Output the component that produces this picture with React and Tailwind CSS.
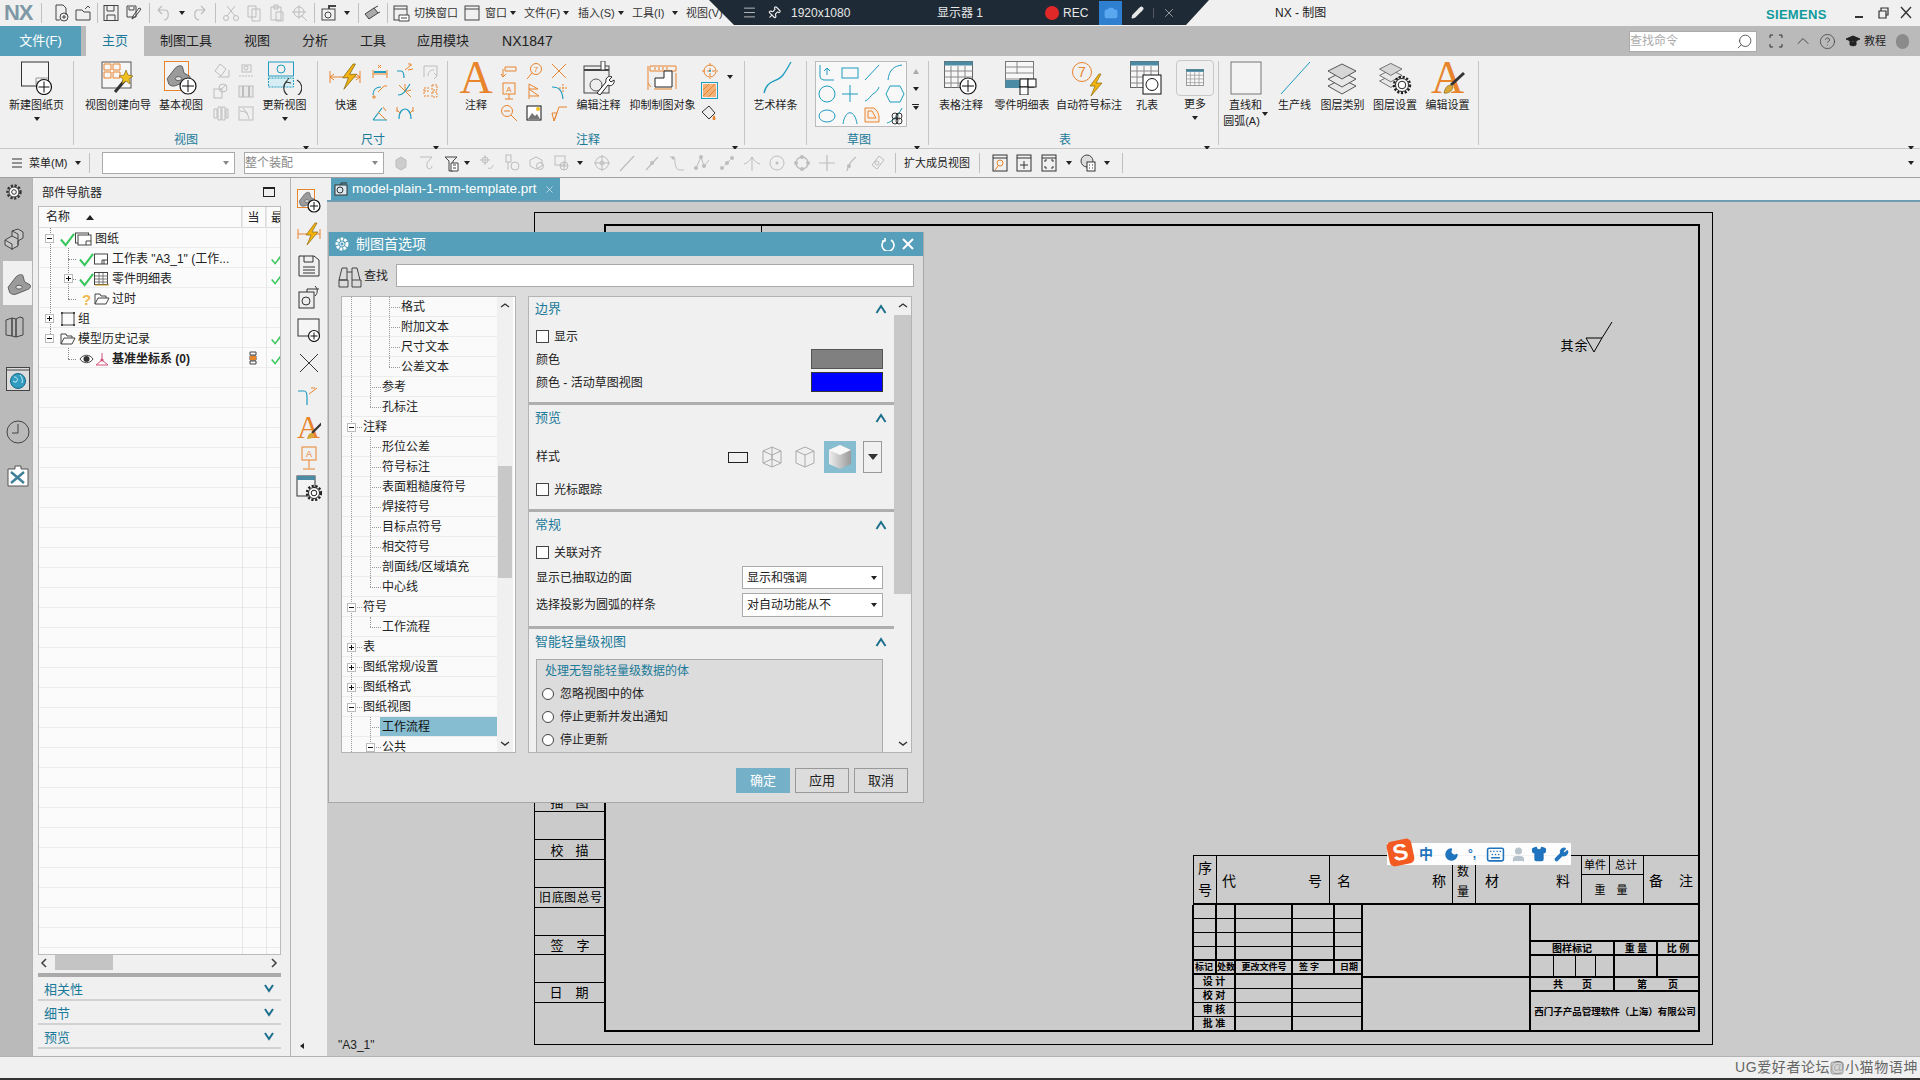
import React from 'react';
import clsx from 'clsx';
import { Moon, Keyboard, Shirt, Wrench, User, Search, HelpCircle, ChevronUp, Menu, Pin, Pencil, X, Camera } from 'lucide-react';

const OR = '#e8842c';
const TE = '#1f9cbf';
const KK = '#3c3c3c';
const GR = '#bdbdbd';

const Svg = ({ s = 20, h, vb, children }) => (
    <svg width={s} height={h || s} viewBox={vb || `0 0 ${s} ${h || s}`} fill="none" className="shrink-0">{children}</svg>
);

const Caret = () => <span className="inline-block w-0 h-0 border-x-[3px] border-x-transparent border-t-[4px] border-t-[#222]" />;

const PlusC = ({ x, y, r = 7 }) => (
    <g>
        <circle cx={x} cy={y} r={r} fill="#fff" stroke="#111" strokeWidth="1.2" />
        <path d={`M${x - r + 2} ${y}H${x + r - 2}M${x} ${y - r + 2}V${y + r - 2}`} stroke="#111" />
    </g>
);
const Bolt = ({ t = '' }) => <path transform={t} d="M14 0L5 12h5L6 22l11-13h-6l5-9z" fill="#f2b310" stroke="#8a6a10" strokeWidth=".7" />;
const Gear = ({ x, y, r = 7, c = '#222' }) => (
    <g>
        <circle cx={x} cy={y} r={r} stroke={c} strokeWidth="2.4" strokeDasharray="2.2 1.6" />
        <circle cx={x} cy={y} r={r - 1.5} fill="#fff" stroke={c} />
        <circle cx={x} cy={y} r={r - 4.2} stroke={c} />
    </g>
);
const Bracket = () => (
    <g>
        <path d="M4 22L14 9c3-3 7-4 9-2l2 8 7 4c2 2 0 5-3 6L14 31c-3 1-6 0-8-2z" fill="#9b9b9b" stroke="#444" />
        <ellipse cx="18" cy="22" rx="4" ry="2.5" fill="#e4e4e4" stroke="#444" />
    </g>
);
const Table = ({ hd = '#4b8ba3' }) => (
    <g>
        <rect x=".5" y=".5" width="28" height="26" fill="#f7f7f7" stroke="#666" />
        <rect x=".5" y=".5" width="28" height="4" fill={hd} />
        <path d="M.5 10h28M.5 16h28M.5 22h28M7 5v22M14 5v22M21 5v22" stroke="#888" />
    </g>
);
const Layers = () => (
    <g stroke="#555" fill="#e8e8e8">
        <path d="M16 18l14 7-14 8-14-8z" />
        <path d="M16 11l14 7-14 8-14-8z" />
        <path d="M16 3l14 7-14 8-14-8z" fill="#d6d6d6" />
    </g>
);

const big = {
    newSheet: <Svg s={34}><rect x="1.5" y="1" width="27" height="24" fill="#f5f5f5" stroke="#333" /><path d="M16 25v-8h12M16 21h12M22 17v8" stroke="#999" /><PlusC x={24} y={26} r={7.5} /></Svg>,
    wizard: <Svg s={34}><rect x="1" y="1" width="29" height="26" fill="#f6f6f6" stroke="#555" /><path d="M3 3h7v6H3zM12 3h7v6h-7zM3 11h7v6H3zM12 11h7v6h-7z" stroke={OR} /><path d="M14 31l10-12" stroke="#333" strokeWidth="3" /><path d="M25 9l2 5 5 1-4 3 1 5-4-3-4 3 1-5-4-3 5-1z" fill="#f0c020" stroke="#7a5a10" strokeWidth=".6" /></Svg>,
    base: <Svg s={34}><rect x=".5" y=".5" width="24" height="29" stroke={OR} fill="#f4f4f4" /><g transform="scale(.8)"><Bracket /></g><PlusC x={24} y={25} r={8} /></Svg>,
    update: <Svg s={34}><rect x=".5" y="1" width="25" height="14" stroke={TE} /><circle cx="13" cy="8" r="4" stroke={TE} /><rect x=".5" y="17" width="25" height="9" stroke={TE} fill="#d6edf3" strokeDasharray="2 1" /><path d="M29 19a9 9 0 1 1-10 1" stroke="#333" strokeWidth="1.2" /><path d="M21 17l-3 4 5 1" stroke="#333" /></Svg>,
    quick: <Svg s={34}><path d="M1 16h30M1 10v12M31 10v12M1 16l4-3M1 16l4 3M31 16l-4-3M31 16l-4 3" stroke={OR} /><Bolt t="translate(8 3) scale(1.15)" /></Svg>,
    edit: <Svg s={34}><rect x="2" y="5" width="25" height="27" fill="#eee" stroke="#444" /><path d="M2 9h25" stroke="#444" strokeWidth="2" /><circle cx="14" cy="24" r="6" stroke="#555" /><path d="M19 0h4v9h-4z" fill="#fff" stroke="#444" /><path d="M15 32l9-11c-1-4 3-7 6-5l-3 3 2 2 3-2c1 4-3 7-6 5l-8 10z" fill="#fff" stroke="#222" /></Svg>,
    suppress: <Svg s={34}><path d="M4 5h26v5H4z" stroke={OR} /><path d="M9 6v3M13 6v3M17 6v3M21 6v3" stroke={OR} /><path d="M2 5v24M2 22l3 4M30 12v16M26 28H8" stroke={OR} /><path d="M9 26V17h9v-7h8v16z" fill="#fff" stroke="#222" /></Svg>,
    spline: <Svg s={34}><path d="M5 32C8 18 18 22 24 14 27 10 29 6 32 1" stroke={TE} strokeWidth="1.3" /></Svg>,
    tableNote: <Svg s={34}><Table /><PlusC x={24} y={25} r={8} /></Svg>,
    parts: <Svg s={34}><rect x=".5" y=".5" width="28" height="26" fill="#f7f7f7" stroke="#777" /><path d="M.5 6h28M.5 12h28M.5 18h28M12 1v12" stroke="#888" /><rect x=".5" y="19" width="18" height="8" fill="#4b8ba3" /><rect x="15" y="18" width="8" height="8" fill="#fff" stroke="#111" /><rect x="23" y="18" width="8" height="8" fill="#fff" stroke="#111" /><rect x="15" y="26" width="8" height="8" fill="#fff" stroke="#111" /></Svg>,
    auto: <Svg s={36}><circle cx="11" cy="11" r="9.5" stroke={OR} /><text x="11" y="16" textAnchor="middle" fontSize="14" fill={OR} fontFamily="Liberation Sans">7</text><Bolt t="translate(14 13) scale(1)" /></Svg>,
    hole: <Svg s={34}><Table /><rect x="13" y="14" width="18" height="19" fill="#fff" stroke="#111" /><circle cx="22" cy="23.5" r="6" stroke="#111" /></Svg>,
    more: <Svg s={18} vb="0 0 29 29"><Table hd="#3f7f98" /></Svg>,
    lineBox: <Svg s={34}><rect x="2" y="1" width="30" height="32" fill="#f3f3f3" stroke="#777" /></Svg>,
    prodLine: <Svg s={34} h={34}><path d="M3 33L32 1" stroke={TE} /></Svg>,
    layers: <Svg s={34}><Layers /></Svg>,
    layerSet: <Svg s={34}><g transform="scale(.8)"><Layers /></g><Gear x={24} y={24} r={8} /></Svg>,
};
const BigA = ({ brush }) => (
    <div className="relative w-[34px] h-[34px]">
        <span className="block w-full text-center font-['Liberation_Serif',serif] text-[46px] leading-[34px] text-[#e8842c]">A</span>
        {brush && <svg width="34" height="34" className="absolute inset-0" fill="none"><path d="M33 12L20 24" stroke="#333" strokeWidth="3" /><path d="M20 24c-4 0-6 3-7 8 4 1 8-2 9-6z" fill="#d8a838" stroke="#7a5a10" strokeWidth=".6" /></svg>}
    </div>
);

const sm = {
    g1: <Svg s={18}><path d="M3 9l5-7 6 5-5 7zM6 15h11V8" stroke={GR} /></Svg>,
    g2: <Svg s={18}><rect x="5" y="3" width="9" height="7" stroke={GR} /><circle cx="9" cy="6" r="2" stroke={GR} /><path d="M2 14h14" stroke={GR} strokeDasharray="2 1" /></Svg>,
    g3: <Svg s={18}><rect x="2" y="7" width="8" height="9" stroke={GR} /><circle cx="11" cy="6" r="4" stroke={GR} /><path d="M8 8l6-5" stroke={GR} /></Svg>,
    g4: <Svg s={18}><rect x="2" y="4" width="14" height="11" stroke={GR} fill="#e8e8e8" /><path d="M6 4v11M12 4v11" stroke={GR} strokeWidth="2" /></Svg>,
    g5: <Svg s={18}><path d="M2 5h3v9H2zM6 3h3v13H6zM10 3h3v13h-3zM14 5h2v9h-2z" stroke={GR} /></Svg>,
    g6: <Svg s={18}><rect x="2" y="3" width="14" height="13" stroke={GR} /><path d="M3 7c6 0 8 3 9 8M6 4l5 6" stroke={GR} /></Svg>,
    d1: <Svg s={18}><path d="M2 8v8M16 8v8M2 12h14" stroke={OR} /><rect x="3" y="9" width="12" height="2" fill={TE} /><path d="M7 3l3 3M10 3L7 6" stroke={OR} /></Svg>,
    d2: <Svg s={18}><path d="M1 9h4c2 0 3 2 3 7" stroke={TE} strokeWidth="1.2" /><path d="M15 3l-6 5M12 8l5-1" stroke={OR} /><path d="M12 2h3v2" stroke={OR} /></Svg>,
    d3: <Svg s={18}><path d="M3 4h13v10M3 4v11M7 14c0-4 2-6 6-6" stroke={GR} /><path d="M13 11l3 3-3 3" stroke={GR} /></Svg>,
    d4: <Svg s={18}><path d="M2 13c0-5 3-8 8-8" stroke={TE} strokeWidth="1.2" /><path d="M7 10l6-6M13 4h3M1 15h4M3 13v4" stroke={OR} /></Svg>,
    d5: <Svg s={18}><path d="M3 3l12 12M9 2c0 8 0 8 6 6" stroke={OR} /><path d="M2 13c6 0 8-5 12-11" stroke={TE} strokeWidth="1.2" /></Svg>,
    d6: <Svg s={18}><path d="M3 12V6h5M3 9h5M11 3h5v5h-5zM11 10h5v5h-5zM3 14h5" stroke={OR} strokeDasharray="2 1" /></Svg>,
    d7: <Svg s={18}><path d="M2 16L11 4M2 16h14" stroke={TE} strokeWidth="1.2" /><path d="M7 8l8 8M12 3l3 4" stroke={OR} /></Svg>,
    d8: <Svg s={18}><path d="M3 15c0-8 4-10 6-10s6 2 6 10" stroke={TE} strokeWidth="1.2" /><path d="M1 6l3 3M17 6l-3 3M1 3v5M17 3v5" stroke={OR} /></Svg>,
    a1: <Svg s={18}><path d="M5 5h11v4H5zM3 7v8M3 15l-2-3M3 15l3-3" stroke={OR} /></Svg>,
    a2: <Svg s={18}><circle cx="11" cy="7" r="5.5" stroke={OR} /><path d="M7 11l-5 6" stroke={OR} /><text x="11" y="10" fontSize="8" textAnchor="middle" fill={OR} fontFamily="Liberation Sans">7</text></Svg>,
    a3: <Svg s={18}><path d="M2 2l14 14M16 2L2 16" stroke={OR} /></Svg>,
    a4: <Svg s={18}><rect x="3" y="1" width="12" height="11" stroke={OR} /><text x="9" y="10" fontSize="8" textAnchor="middle" fill={OR} fontFamily="Liberation Sans">A</text><path d="M9 12v5M5 17h8" stroke={OR} /></Svg>,
    a5: <Svg s={18}><path d="M4 17V2l9 5H4M4 7l10 7H4" stroke={OR} /></Svg>,
    a6: <Svg s={18}><path d="M2 5c7 0 10 3 11 12" stroke={TE} strokeWidth="1.2" /><path d="M13 2v8M9 6h8" stroke={OR} strokeDasharray="2 1" /></Svg>,
    a7: <Svg s={18}><circle cx="7" cy="7" r="5.5" stroke={OR} /><path d="M4 7h6M11 11l6 6" stroke={OR} /></Svg>,
    a8: <Svg s={18}><rect x="2" y="2" width="14" height="14" fill="#fff" stroke="#111" /><path d="M3 15l4-6 3 3 2-2 3 5z" fill="#777" /><circle cx="13" cy="5" r="2" fill="#f2c020" /></Svg>,
    a9: <Svg s={18}><path d="M2 9l5 0-3 8zM4 17L9 3h8" stroke={OR} /></Svg>,
    target: <Svg s={18}><circle cx="9" cy="9" r="6" stroke={OR} /><path d="M9 1v16M1 9h16" stroke={OR} strokeDasharray="3 2" /><circle cx="9" cy="9" r="1" fill={TE} /></Svg>,
    hatch: <Svg s={18}><rect x=".5" y=".5" width="16" height="16" stroke={TE} /><rect x="2" y="2" width="13" height="13" fill="#f3b27a" /><path d="M2 8l6-6M2 14L14 2M7 15l8-8" stroke="#e8842c" /></Svg>,
    fill: <Svg s={18}><path d="M1 8l7-6 6 7-6 6z" fill="#eee" stroke="#333" /><path d="M13 11c-2 3-2 5 0 5s2-2 0-5z" fill={OR} /></Svg>,
};

const gal = [
    <path d="M3 3v11c0 3 2 4 5 4h9M10 13V7M7 9l3-3 3 3" stroke={TE} />,
    <rect x="2" y="6" width="16" height="10" stroke={TE} />,
    <path d="M3 18L17 3" stroke={TE} />,
    <path d="M3 18C4 8 9 4 17 3" stroke={TE} />,
    <circle cx="10" cy="11" r="8" stroke={TE} />,
    <path d="M10 2v17M2 11h16" stroke={TE} />,
    <path d="M3 18c4-1 5-5 8-7s5-4 6-7" stroke={TE} />,
    <path d="M5 3h10l4 8-4 8H5l-4-8z" stroke={TE} />,
    <ellipse cx="10" cy="11" rx="8" ry="6" stroke={TE} />,
    <path d="M3 19C5 4 15 4 17 19" stroke={TE} />,
    <path d="M3 3h9c3 2 5 6 5 9v5H3zM6 6h4l4 7H6z" stroke={OR} fill="#f8f0e8" />,
    <g><path d="M2 18c4-1 10-5 15-15" stroke={TE} /><circle cx="10" cy="11" r="3" stroke="#333" /><circle cx="14" cy="11" r="3" stroke="#333" /><circle cx="10" cy="16" r="3" stroke="#333" /><circle cx="14" cy="16" r="3" stroke="#333" /></g>,
];

const tb = {
    nx1: <Svg s={18}><path d="M4 1h7l3 3v7M4 1v15h4" stroke="#444" /><circle cx="12" cy="13" r="4" stroke="#444" /><path d="M10 13h4M12 11v4" stroke="#444" /></Svg>,
    nx2: <Svg s={18}><path d="M2 6h6l2 2h6v8H2zM11 5l3-3 2 2" stroke="#444" /></Svg>,
    save: <Svg s={18}><rect x="2" y="1.5" width="14" height="15" stroke="#444" /><path d="M5 2v5h7V2M5 16v-5h8v5" stroke="#444" /></Svg>,
    saveas: <Svg s={18}><path d="M2 2h9v11H2zM4 3v3h5V3M16 5l-6 8-3 2 1-3 6-8z" stroke="#444" /></Svg>,
    undo: <Svg s={18}><path d="M4 6h7c4 0 5 9-1 10M4 6l4-4M4 6l4 4" stroke={GR} strokeWidth="1.2" /></Svg>,
    redo: <Svg s={18}><path d="M14 6H7c-4 0-5 9 1 10M14 6l-4-4M14 6l-4 4" stroke={GR} strokeWidth="1.2" /></Svg>,
    cut: <Svg s={18}><circle cx="4" cy="14" r="2.5" stroke={GR} /><circle cx="14" cy="14" r="2.5" stroke={GR} /><path d="M5 12L13 2M13 12L5 2" stroke={GR} /></Svg>,
    copy: <Svg s={18}><path d="M3 2h8v11H3zM7 5h8v12H7z" stroke={GR} /></Svg>,
    paste: <Svg s={18}><path d="M3 3h10v13H3zM6 1h4v4H6zM8 8h7v9H8z" stroke={GR} /></Svg>,
    pos: <Svg s={18}><circle cx="8" cy="8" r="5" stroke={GR} /><path d="M8 1v14M1 8h14M10 11l6 6" stroke={GR} /></Svg>,
    cam: <Svg s={18}><rect x="2" y="5" width="13" height="11" stroke="#444" /><circle cx="8" cy="11" r="3" stroke="#444" /><path d="M9 5V2h7" stroke="#444" strokeWidth="2" /></Svg>,
    wand: <Svg s={18}><path d="M2 10l9-6 4 5-9 6z" fill="#aaa" stroke="#444" /><path d="M11 4l4-2M15 9l2-1" stroke="#444" /></Svg>,
    win: <Svg s={18}><rect x="2" y="2" width="13" height="14" stroke="#444" /><path d="M2 5h13M7 11h10v6H7z" stroke="#444" fill="#fff" /><path d="M9 14h6" stroke="#444" /></Svg>,
    win2: <Svg s={18}><rect x="2" y="2" width="14" height="14" stroke="#444" /><path d="M2 5h14" stroke="#444" /></Svg>,
};
const gy = [
    <path d="M4 6l5-3 5 3v7l-5 3-5-3z" fill="#ccc" stroke={GR} />,
    <path d="M3 3h12l-5 6v4M10 13c1 3 5 2 5-1" stroke={GR} />,
    <g><path d="M3 3h12l-4 4v10H7V7z" stroke="#444" /><path d="M9 9h7v8H9z" fill="#fff" stroke="#444" /><path d="M11 11h3M11 14h3" stroke="#444" /></g>,
    <g><circle cx="7" cy="6" r="3" stroke={GR} /><path d="M7 1v10M2 6h10M10 14c2 1 5 0 5-3" stroke={GR} /></g>,
    <g><rect x="3" y="1" width="5" height="7" stroke={GR} /><path d="M5 8v8" stroke={GR} /><circle cx="12" cy="12" r="4" stroke={GR} /></g>,
    <g><path d="M2 6l6-3 6 3v6l-6 3-6-3z" stroke={GR} /><circle cx="12" cy="12" r="3.5" stroke={GR} /></g>,
    <g><rect x="2" y="2" width="10" height="9" stroke={GR} /><circle cx="11" cy="12" r="4" stroke={GR} /><path d="M7 12h8M11 8v8" stroke={GR} /></g>,
    <g><circle cx="9" cy="9" r="6.5" stroke={GR} /><circle cx="9" cy="9" r="2" stroke={GR} /><path d="M9 1v16M1 9h16" stroke={GR} /></g>,
    <path d="M2 17L16 2" stroke={GR} strokeWidth="1.2" />,
    <g><path d="M3 16L15 3" stroke={GR} strokeWidth="1.2" /><circle cx="9" cy="9" r="2" fill={GR} /></g>,
    <g><path d="M2 3h3c3 0 1 6 3 10 1 3 3 3 8 3" stroke={GR} /><circle cx="5" cy="4" r="1.5" fill={GR} /></g>,
    <g><path d="M3 14L8 3l3 9 5-6" stroke={GR} /><circle cx="3" cy="14" r="2" fill={GR} /><circle cx="8" cy="3" r="2" fill={GR} /><circle cx="11" cy="12" r="2" fill={GR} /></g>,
    <g><path d="M3 15L15 3" stroke={GR} strokeDasharray="3 2" /><circle cx="4" cy="14" r="2" fill={GR} /><circle cx="9" cy="9" r="2" fill={GR} /><circle cx="14" cy="4" r="2" fill={GR} /></g>,
    <path d="M9 3v14M1 10c3-1 6-3 8-7 2 4 5 6 8 7" stroke={GR} />,
    <g><circle cx="9" cy="9" r="7" stroke={GR} /><circle cx="9" cy="9" r="1.5" fill={GR} /></g>,
    <g><circle cx="9" cy="9" r="6" stroke={GR} strokeWidth="1.4" /><circle cx="9" cy="3" r="2" fill={GR} /><circle cx="3" cy="9" r="2" fill={GR} /><circle cx="15" cy="9" r="2" fill={GR} /><circle cx="9" cy="15" r="2" fill={GR} /></g>,
    <path d="M9 1v16M1 9h16" stroke={GR} strokeWidth="1.2" />,
    <g><path d="M4 17c1-6 4-10 9-14" stroke={GR} strokeWidth="1.2" /><circle cx="6" cy="12" r="2" fill={GR} /></g>,
    <g><path d="M4 11l7-9 5 4-7 9z" stroke={GR} /><circle cx="9" cy="9" r="2" stroke={GR} /></g>,
];
const dk = [
    <g><rect x="2" y="1" width="14" height="16" stroke="#333" /><path d="M2 4h14" stroke="#333" /><circle cx="9" cy="9" r="3" stroke={OR} /><path d="M7 12l-3 4" stroke={OR} /></g>,
    <g><rect x="2" y="1" width="14" height="16" stroke="#333" /><path d="M2 4h14M9 7v8M5 11h8" stroke="#333" /></g>,
    <g><rect x="2" y="1" width="14" height="16" stroke="#333" /><path d="M2 4h14M5 8V6h2M13 8V6h-2M5 12v2h2M13 12v2h-2" stroke="#333" /></g>,
    <g><circle cx="8" cy="7" r="6" stroke="#444" fill="#ddd" /><rect x="8" y="8" width="8" height="9" fill="#fff" stroke="#333" /><path d="M10 11h1M13 11h1M10 14h1M13 14h1" stroke="#333" /></g>,
];

const Sep = () => <span className="w-px h-[20px] bg-[#c0c0c0] shrink-0" />;
const Cell = ({ w, children }) => <span className={clsx('flex justify-center items-center shrink-0', w)}>{children}</span>;
const Gap = ({ w }) => <span className={clsx('shrink-0', w)} />;

const TitleBar = () => (
    <div className="relative h-[26px] bg-[#f0f0f0] flex items-center text-[11px] text-[#333] whitespace-nowrap">
        <span className="w-[41px] pl-[4px] font-['Liberation_Sans',sans-serif] text-[22px] font-bold text-[#7f98a6] leading-none tracking-tighter">NX</span>
        <Sep /><Gap w="w-[8px]" />
        <Cell w="w-[22px]">{tb.nx1}</Cell><Cell w="w-[21px]">{tb.nx2}</Cell>
        <Gap w="w-[4px]" /><Sep /><Gap w="w-[2px]" />
        <Cell w="w-[22px]">{tb.save}</Cell><Cell w="w-[23px]">{tb.saveas}</Cell>
        <Gap w="w-[4px]" /><Sep /><Gap w="w-[2px]" />
        <Cell w="w-[22px]">{tb.undo}</Cell><Cell w="w-[16px]"><Caret /></Cell><Cell w="w-[20px]">{tb.redo}</Cell>
        <Gap w="w-[5px]" /><Sep /><Gap w="w-[3px]" />
        <Cell w="w-[23px]">{tb.cut}</Cell><Cell w="w-[23px]">{tb.copy}</Cell><Cell w="w-[23px]">{tb.paste}</Cell><Cell w="w-[23px]">{tb.pos}</Cell>
        <Gap w="w-[3px]" /><Sep /><Gap w="w-[3px]" />
        <Cell w="w-[22px]">{tb.cam}</Cell><Cell w="w-[14px]"><Caret /></Cell>
        <Gap w="w-[4px]" /><Sep /><Gap w="w-[2px]" />
        <Cell w="w-[22px]">{tb.wand}</Cell>
        <Gap w="w-[4px]" /><Sep />
        <Cell w="w-[26px]">{tb.win}</Cell><span className="w-[44px]">切换窗口</span>
        <Gap w="w-[1px]" /><Cell w="w-[26px]">{tb.win2}</Cell><span className="w-[22px]">窗口</span>
        <Cell w="w-[12px]"><Caret /></Cell><Gap w="w-[5px]" />
        <span className="w-[29px]">文件(F)</span><Cell w="w-[25px]"><Caret /></Cell>
        <span className="w-[36px]">插入(S)</span><Cell w="w-[14px]"><Caret /></Cell><Gap w="w-[4px]" />
        <span className="w-[35px]">工具(I)</span><Cell w="w-[16px]"><Caret /></Cell><Gap w="w-[3px]" />
        <span className="w-[35px]">视图(V)</span>
        <span className="ml-[554px] w-[55px] text-[12px] text-[#222]">NX - 制图</span>
        <span className="ml-[436px] w-[62px] font-['Liberation_Sans',sans-serif] text-[13px] font-bold text-[#0f9a9c] tracking-[.3px] pt-[3px]">SIEMENS</span>
        <span className="ml-[23px]"><Svg s={14}><path d="M4 11h8" stroke="#333" strokeWidth="2" /></Svg></span>
        <span className="ml-[11px]"><Svg s={14}><path d="M3 5h7v7H3zM5 5V2h7v7h-2" stroke="#333" strokeWidth="1.2" /></Svg></span>
        <span className="ml-[8px]"><Svg s={16}><path d="M3 2l10 11M13 2L3 13" stroke="#333" strokeWidth="1.4" /></Svg></span>

        {/* screen recorder overlay */}
        <div className="absolute left-[709px] top-0 w-[500px] h-[25px] bg-[#1e2a36] text-[#e8e8e8] flex items-center [clip-path:polygon(0_0,100%_0,477px_100%,25px_100%)]">
            <span className="ml-[33px]"><Menu size={15} strokeWidth={1.2} /></span>
            <span className="ml-[10px] rotate-45"><Pin size={14} /></span>
            <span className="ml-[10px] w-[62px] font-['Liberation_Sans',sans-serif] text-[12px]">1920x1080</span>
            <span className="ml-[84px] w-[47px] text-[12px]">显示器 1</span>
            <span className="ml-[61px] w-[14px] h-[14px] rounded-full bg-[#e02828]" />
            <span className="ml-[4px] w-[26px] font-['Liberation_Sans',sans-serif] text-[12px]">REC</span>
            <span className="ml-[10px] w-[23px] h-[24px] bg-[#2f7fd0] flex items-center justify-center"><Camera size={14} className="text-[#5aa8f0]" fill="#5aa8f0" /></span>
            <span className="ml-[9px] w-[16px]"><Pencil size={13} fill="#e8e8e8" /></span>
            <span className="ml-[6px] w-px h-[10px] bg-[#556]" />
            <span className="ml-[8px]"><X size={14} strokeWidth={1} /></span>
        </div>
    </div>
);

const TabBar = () => (
    <div className="h-[30px] bg-[#bababa] flex items-stretch text-[13px] text-[#222] whitespace-nowrap">
        <span className="w-[81px] bg-[#559fba] text-white flex items-center justify-center">文件(F)</span>
        <span className="ml-[5px] w-[58px] bg-[#f0f0f0] text-[#1b7a99] flex items-center justify-center">主页</span>
        <span className="ml-[16px] self-center">制图工具</span>
        <span className="ml-[32px] self-center">视图</span>
        <span className="ml-[32px] self-center">分析</span>
        <span className="ml-[32px] self-center">工具</span>
        <span className="ml-[31px] self-center">应用模块</span>
        <span className="ml-[33px] w-[50px] self-center font-['Liberation_Sans',sans-serif] text-[14px]">NX1847</span>
        <span className="ml-[1077px] self-center w-[128px] h-[21px] bg-white border border-[#aaa] flex items-center text-[12px] text-[#aaa] pr-[3px]">查找命令<span className="ml-auto -scale-x-100 text-[#444]"><Search size={17} strokeWidth={1.2} /></span></span>
        <span className="ml-[10px] self-center"><Svg s={18}><path d="M3 6V3h3M15 6V3h-3M3 12v3h3M15 12v3h-3" stroke="#333" /></Svg></span>
        <span className="ml-[8px] self-center text-[#333]"><ChevronUp size={20} strokeWidth={1} /></span>
        <span className="ml-[6px] self-center text-[#333]"><HelpCircle size={17} strokeWidth={1} /></span>
        <span className="ml-[9px] self-center"><Svg s={16}><path d="M1 6l7-3 7 3-7 3zM5 8v4c2 1 4 1 6 0V8" fill="#222" stroke="#222" /></Svg></span>
        <span className="ml-[3px] self-center text-[11px]">教程</span>
        <span className="ml-[10px] self-center w-[13px] h-[15px] rounded-full bg-[#8b8b8b]" />
    </div>
);

const Group = ({ w, label, lp, caret, cr, children }) => (
    <div className={clsx('relative h-[84px] shrink-0 flex flex-col border-r border-[#c6c6c6]', w)}>
        <div className="h-[71px] flex items-start">{children}</div>
        {label && <span className={clsx('h-[13px] leading-[16px] text-[12px] text-[#1b7a99]', lp)}>{label}</span>}
        {caret && <span className={clsx('absolute top-[76px] leading-none', cr)}><Caret /></span>}
    </div>
);

const Big = ({ w, icon, label, label2, caret, c2 }) => (
    <div className={clsx('flex flex-col items-center shrink-0 whitespace-nowrap text-[11px] text-[#222]', w)}>
        <div className="h-[34px] flex items-start justify-center">{icon}</div>
        <span className="h-[16px] leading-[16px] mt-[2px]">{label}</span>
        {label2 && <span className="h-[16px] leading-[16px] flex items-start">{label2}{c2 && <span className="-mt-[1px] ml-[2px] leading-none flex"><Caret /></span>}</span>}
        {caret && <span className="mt-[4px] leading-none flex"><Caret /></span>}
    </div>
);

const SmGrid = ({ cols, ml, items }) => (
    <div className={clsx('grid grid-rows-[19px_22px_22px] shrink-0', cols, ml)}>
        {items.map((it, i) => <span key={i} className="flex items-center justify-center">{it}</span>)}
    </div>
);

const Ribbon = () => (
    <div className="relative h-[93px] bg-[#f0f0f0] pt-[5px] flex border-b border-[#c8c8c8]">
        <Group w="w-[74px]"><Big w="w-[73px]" icon={big.newSheet} label="新建图纸页" caret /></Group>
        <Group w="w-[244px]" label="视图" lp="pl-[100px]" caret cr="left-[229px]">
            <Big w="w-[88px]" icon={big.wizard} label="视图创建向导" />
            <Big w="w-[38px]" icon={big.base} label="基本视图" />
            <SmGrid cols="grid-cols-[25px_25px]" ml="ml-[8px]" items={[sm.g1, sm.g2, sm.g3, sm.g4, sm.g5, sm.g6]} />
            <Big w="w-[53px]" icon={big.update} label="更新视图" caret />
        </Group>
        <Group w="w-[130px]" label="尺寸" lp="pl-[43px]" caret cr="left-[115px]">
            <Big w="w-[56px]" icon={big.quick} label="快速" />
            <SmGrid cols="grid-cols-[25px_25px_25px]" ml="-ml-[7px]" items={[sm.d1, sm.d2, sm.d3, sm.d4, sm.d5, sm.d6, sm.d7, sm.d8]} />
        </Group>
        <Group w="w-[297px]" label="注释" lp="pl-[128px]" caret cr="left-[284px]">
            <Big w="w-[56px]" icon={<BigA />} label="注释" />
            <SmGrid cols="grid-cols-[25px_25px_25px]" ml="-ml-[8px]" items={[sm.a1, sm.a2, sm.a3, sm.a4, sm.a5, sm.a6, sm.a7, sm.a8, sm.a9]} />
            <Big w="w-[55px]" icon={big.edit} label="编辑注释" />
            <Big w="w-[73px]" icon={big.suppress} label="抑制制图对象" />
            <SmGrid cols="grid-cols-[22px]" items={[sm.target, sm.hatch, sm.fill]} />
            <span className="mt-[5px] ml-[6px] leading-none"><Caret /></span>
        </Group>
        <Group w="w-[62px]"><Big w="w-[61px]" icon={big.spline} label="艺术样条" /></Group>
        <Group w="w-[122px]" label="草图" lp="pl-[40px]" caret cr="left-[107px]">
            <div className="ml-[8px] w-[92px] h-[66px] bg-[#f8f8f8] border border-[#bbb] grid grid-cols-4 grid-rows-3 shrink-0 items-center justify-items-center">
                {gal.map((g, i) => <Svg key={i} s={20} h={21}>{g}</Svg>)}
            </div>
            <div className="ml-[5px] flex flex-col items-center gap-[13px] pt-[8px] text-[#888]">
                <span className="w-0 h-0 border-x-[3px] border-x-transparent border-b-[5px] border-b-[#aaa]" />
                <Caret />
                <span className="flex flex-col items-center gap-[1px]"><span className="w-[7px] h-px bg-[#222]" /><Caret /></span>
            </div>
        </Group>
        <Group w="w-[290px]" label="表" lp="pl-[130px]" caret cr="left-[275px]">
            <Big w="w-[64px]" icon={big.tableNote} label="表格注释" />
            <Big w="w-[58px]" icon={big.parts} label="零件明细表" />
            <Big w="w-[76px]" icon={big.auto} label="自动符号标注" />
            <Big w="w-[40px]" icon={big.hole} label="孔表" />
            <div className="w-[38px] flex flex-col items-center text-[11px] text-[#222] ml-[9px] -mt-[1px]">
                <span className="w-[38px] h-[36px] rounded-[4px] border border-[#c8c8c8] flex items-center justify-center">{big.more}</span>
                <span className="h-[16px] leading-[16px]">更多</span>
                <span className="mt-[4px] leading-none flex"><Caret /></span>
            </div>
        </Group>
        <Group w="w-[260px]">
            <Big w="w-[53px]" icon={big.lineBox} label="直线和" label2="圆弧(A)" c2 />
            <Big w="w-[45px]" icon={big.prodLine} label="生产线" />
            <Big w="w-[51px]" icon={big.layers} label="图层类别" />
            <Big w="w-[54px]" icon={big.layerSet} label="图层设置" />
            <Big w="w-[51px]" icon={<BigA brush />} label="编辑设置" />
        </Group>
        <span className="absolute left-[1908px] top-[81px] leading-none"><Caret /></span>
    </div>
);

const Sel = ({ w, text }) => (
    <span className={clsx('h-[22px] bg-white border border-[#aaa] flex items-center text-[12px] text-[#888] pr-[5px] shrink-0', w)}>
        {text}<span className="ml-auto w-0 h-0 border-x-[3px] border-x-transparent border-t-[4px] border-t-[#888]" />
    </span>
);
const TI = ({ i, w = 'w-[25px]', arr = gy }) => <Cell w={w}><Svg s={18}>{arr[i]}</Svg></Cell>;

const Toolbar = () => (
    <div className="relative h-[29px] bg-[#f0f0f0] border-b border-[#a0a0a0] flex items-center text-[11px] text-[#222] whitespace-nowrap">
        <Gap w="w-[8px]" /><Cell w="w-[18px]"><Svg s={12}><path d="M1 2h10M1 6h10M1 10h10" stroke="#333" /></Svg></Cell>
        <Gap w="w-[3px]" /><span className="w-[41px]">菜单(M)</span><Cell w="w-[16px]"><Caret /></Cell><Gap w="w-[3px]" /><Sep />
        <Gap w="w-[12px]" /><Sel w="w-[133px]" /><Gap w="w-[9px]" /><Sel w="w-[140px]" text="整个装配" /><Gap w="w-[4px]" />
        <TI i={0} /><TI i={1} /><TI i={2} /><Cell w="w-[8px]"><Caret /></Cell><Gap w="w-[3px]" />
        <TI i={3} /><TI i={4} /><TI i={5} /><TI i={6} /><Cell w="w-[12px]"><Caret /></Cell><Gap w="w-[3px]" />
        <TI i={7} /><TI i={8} /><TI i={9} /><TI i={10} /><TI i={11} /><TI i={12} /><TI i={13} /><TI i={14} /><TI i={15} /><TI i={16} /><TI i={17} /><TI i={18} />
        <Gap w="w-[6px]" /><Sep /><Gap w="w-[8px]" /><span className="w-[66px]">扩大成员视图</span><Gap w="w-[9px]" /><Sep /><Gap w="w-[7px]" />
        <TI i={0} arr={dk} /><TI i={1} arr={dk} w="w-[24px]" /><TI i={2} arr={dk} w="w-[26px]" /><Cell w="w-[14px]"><Caret /></Cell>
        <TI i={3} arr={dk} w="w-[24px]" /><Cell w="w-[14px]"><Caret /></Cell><Gap w="w-[8px]" /><Sep />
        <span className="ml-auto mr-[6px] flex"><Caret /></span>
    </div>
);

const strip = [
    <Svg s={18}><Gear x={9} y={9} r={6.5} c="#333" /></Svg>,
    <Svg s={24}><path d="M3 12l7-4v-5l6-2 5 3v6l-5 3v5l-6 3-7-4z" fill="#c8c8c8" stroke="#444" /><path d="M10 3l6 3v11M3 12l7 4v6M10 8l6 3" stroke="#444" /></Svg>,
];

const SideNav = () => (
    <div className="w-[32px] bg-[#bababa] shrink-0 flex flex-col items-start">
        <div className="h-[27px] w-[28px] flex items-center justify-center">{strip[0]}</div>
        <div className="h-[56px] w-[28px] pt-[23px] flex justify-center">{strip[1]}</div>
        <div className="h-[44px] w-[29px] ml-[3px] bg-[#f0f0f0] flex items-center justify-center">
            <Svg s={26}><g transform="scale(.78)"><Bracket /></g></Svg>
        </div>
        <div className="h-[42px] w-[32px] flex items-center justify-center -ml-[2px]">
            <Svg s={24}><path d="M4 6l6-2v18l-6-1zM10 4l4 1v18l-4-1zM14 5l4-2 3 1v17l-7 2z" stroke="#444" /></Svg>
        </div>
        <div className="h-[64px] w-[36px] flex items-center justify-center">
            <Svg s={24}><rect x=".5" y=".5" width="23" height="23" fill="#ddd" stroke="#444" /><path d="M1 3h22" stroke="#444" /><circle cx="12" cy="14" r="7.5" fill="#2f9cc0" stroke="#1a6a88" /><path d="M8 10c3 0 4 2 3 4s-3 1-4 0M14 8c2 2 3 5 2 8" stroke="#cfeef5" /></Svg>
        </div>
        <div className="h-[42px] w-[35px] flex items-center justify-center">
            <Svg s={24}><circle cx="12" cy="12" r="11" stroke="#444" /><path d="M12 4v9H6" stroke="#444" /></Svg>
        </div>
        <div className="h-[46px] w-[36px] flex items-center justify-center">
            <Svg s={22}><path d="M1 4h7V1h6v3h7v17H1z" fill="#fff" stroke="#555" /><path d="M4 7l13 11M17 7L4 18" stroke="#3f7f98" strokeWidth="2.4" /></Svg>
        </div>
    </div>
);

const Check = ({ s = 16 }) => <svg width={s} height={s} viewBox="0 0 16 16" fill="none" className="shrink-0"><path d="M1 8l5 6L15 2" stroke="#37c65b" strokeWidth="2.2" /></svg>;
const Expander = ({ sign, cls }) => (
    <span className={clsx('absolute z-10 top-[6px] w-[9px] h-[9px] bg-white border border-[#bbb] flex items-center justify-center', cls)}>
        <span className="w-[5px] h-px bg-[#111]" />
        {sign === '+' && <span className="absolute w-px h-[5px] bg-[#111]" />}
    </span>
);
const Folder = () => <Svg s={16} h={14}><path d="M1 12V2h5l1 2h5v2M1 12l3-6h11l-3 6z" fill="#fbfbfb" stroke="#444" /></Svg>;
const Sheet = () => <Svg s={16} h={14}><rect x=".5" y="2" width="13" height="10" fill="#fff" stroke="#444" /><path d="M8 12V8h5.5M10 8v4" stroke="#444" /></Svg>;

const nav = [
    { t: '图纸', ex: '-', lv: 0, chk: 1, ico: <Svg s={18} h={14}><rect x=".5" y="1" width="13" height="10" fill="#fff" stroke="#444" /><rect x="3" y="3" width="13" height="10" fill="#fff" stroke="#444" /><path d="M11 13V9h5" stroke="#444" /></Svg> },
    { t: '工作表 "A3_1" (工作...', lv: 1, chk: 1, ok: 1, ico: <Sheet /> },
    { t: '零件明细表', ex: '+', lv: 1, chk: 1, ok: 1, ico: <Svg s={16} h={14}><rect x=".5" y=".5" width="13" height="12" fill="#fff" stroke="#444" /><path d="M1 4h13M1 7h13M1 10h13M5 1v11M9 1v11" stroke="#777" /><path d="M1 13h14" stroke="#c8a020" /></Svg> },
    { t: '过时', lv: 1, q: 1, ico: <Folder /> },
    { t: '组', ex: '+', lv: 2, ico: <Svg s={16}><rect x="2" y="2" width="12" height="12" stroke="#444" /><path d="M1 1h2v2H1zM13 1h2v2h-2zM1 13h2v2H1zM13 13h2v2h-2z" fill="#444" /></Svg> },
    { t: '模型历史记录', ex: '-', lv: 2, ok: 1, ico: <Folder /> },
    { t: '基准坐标系 (0)', lv: 3, ok: 1, bold: 1, tree: 1 },
];

const NavRow = ({ r, i }) => (
    <div className="relative h-[20px] border-b border-[#ececec] text-[12px] leading-[19px] text-[#222] whitespace-nowrap">
        {i < 5 && <i className="absolute left-[11px] top-0 bottom-0 border-l border-dotted border-[#888]" />}
        {i === 5 && <i className="absolute left-[11px] top-0 h-[10px] border-l border-dotted border-[#888]" />}
        {i >= 1 && i <= 3 && <i className={clsx('absolute left-[29px] top-0 border-l border-dotted border-[#888]', i === 3 ? 'h-[11px]' : 'bottom-0')} />}
        {i === 6 && <i className="absolute left-[29px] top-0 h-[11px] border-l border-dotted border-[#888]" />}
        {(r.lv === 1 || r.lv === 3) && <i className="absolute left-[29px] top-[11px] w-[8px] border-t border-dotted border-[#888]" />}
        {r.ex && <Expander sign={r.ex} cls={r.lv === 1 ? 'left-[25px]' : 'left-[6px]'} />}
        <div className={clsx('flex items-center h-[22px]', (r.lv === 1 || r.lv === 3) ? 'pl-[40px]' : 'pl-[21px]')}>
            {r.chk && <Check s={15} />}
            {r.q && <span className="w-[15px] text-center text-[#f2b84c] font-bold text-[15px] leading-none">?</span>}
            {r.lv === 3 && <Svg s={15}><path d="M1 7c3-5 10-5 13 0-3 5-10 5-13 0z" stroke="#444" /><circle cx="7.5" cy="7" r="3" fill="#333" /></Svg>}
            {r.tree ? <Svg s={16}><path d="M8 2v7l-6 5M8 9l6 5M2 14h12" stroke="#d4537a" /><circle cx="8" cy="9" r="1.6" fill="#d4537a" /></Svg> : r.ico}
            <span className={clsx('ml-[2px]', r.bold && 'font-bold')}>{r.t}</span>
        </div>
        {r.tree && <span className="absolute left-[210px] top-[3px]"><Svg s={10} h={14}><path d="M1 1h6v3H1zM1 5h6v4H1zM1 10h6v3H1z" stroke="#444" /><rect x="1" y="5" width="6" height="4" fill={OR} /></Svg></span>}
        {r.ok && <span className="absolute left-[232px] top-[6px]"><Check s={11} /></span>}
    </div>
);

const Bottom = ({ t }) => (
    <div className="h-[24px] mx-[5px] w-[243px] border-b-2 border-[#d2d2d2] flex items-center justify-between pl-[6px] pr-[6px] text-[13px] text-[#1b7a99]">
        <span className="mt-[4px]">{t}</span>
        <Svg s={12}><path d="M2 3l4 6 4-6" stroke="#1b6f8d" strokeWidth="2" /></Svg>
    </div>
);

const Navigator = () => (
    <div className="w-[259px] shrink-0 bg-[#f0f0f0] border-l border-[#b4b4b4] border-r flex flex-col">
        <div className="h-[28px] pl-[9px] pr-[15px] flex items-center justify-between text-[12px] text-[#222]">
            <span className="mt-[2px]">部件导航器</span>
            <span className="w-[12px] h-[10px] border border-[#222] border-t-2" />
        </div>
        <div className="relative mx-[5px] w-[243px] h-[749px] bg-[#fbfbfb] border border-[#bbb] overflow-hidden">
            <div className="flex h-[21px] border-b border-[#ddd] text-[12px] text-[#222] leading-[22px]">
                <span className="w-[203px] shrink-0 pl-[7px] border-r border-[#ddd] flex items-center gap-[16px]">名称<span className="w-0 h-0 border-x-[4px] border-x-transparent border-b-[5px] border-b-[#222]" /></span>
                <span className="w-[24px] shrink-0 border-r border-[#ddd] text-center">当</span>
                <span className="pl-[5px] shrink-0">最</span>
            </div>
            {nav.map((r, i) => <NavRow key={i} r={r} i={i} />)}
            {Array.from({ length: 30 }).map((_, i) => <div key={i} className="h-[20px] border-b border-[#ececec]" />)}
            <i className="absolute left-[203px] top-0 bottom-0 border-l border-[#e6e6e6]" />
            <i className="absolute left-[227px] top-0 bottom-0 border-l border-[#e6e6e6]" />
        </div>
        <div className="mx-[5px] w-[243px] h-[15px] bg-[#f0f0f0] flex items-center">
            <Svg s={14}><path d="M8 3L4 7l4 4" stroke="#444" strokeWidth="1.6" /></Svg>
            <span className="ml-[3px] w-[58px] h-full bg-[#c4c4c4]" />
            <span className="ml-auto"><Svg s={14}><path d="M5 3l4 4-4 4" stroke="#444" strokeWidth="1.6" /></Svg></span>
        </div>
        <div className="mx-[5px] w-[243px] mt-[3px] h-[4px] bg-[#aaa]" />
        <Bottom t="相关性" /><Bottom t="细节" /><Bottom t="预览" />
    </div>
);

const vIcons = [
    <Svg s={24}><rect x=".5" y=".5" width="17" height="18" stroke={OR} fill="#f4f4f4" /><g transform="scale(.55)"><Bracket /></g><PlusC x={17} y={17} r={6} /></Svg>,
    <Svg s={24}><path d="M1 12h22M1 7v10M23 7v10" stroke={OR} /><g transform="translate(4 1)"><Bolt /></g></Svg>,
    <Svg s={24}><path d="M2 2h15l5 4v16H2zM7 2v6h9V2M6 13h12M6 16h12M6 19h12" stroke="#333" /></Svg>,
    <Svg s={24}><rect x="2" y="6" width="15" height="16" stroke="#333" fill="#eee" /><circle cx="9" cy="15" r="4" stroke="#333" /><path d="M10 6V3h12M18 0c3 3 3 7 0 10" stroke="#333" /></Svg>,
    <Svg s={24}><rect x="1" y="1" width="21" height="17" stroke="#333" fill="#f5f5f5" /><PlusC x={17} y={18} r={5.5} /></Svg>,
    <Svg s={24}><path d="M3 3l18 18M21 3L3 21" stroke="#333" /></Svg>,
    <Svg s={24}><path d="M1 8h6c2 0 3 2 3 6v8" stroke={TE} strokeWidth="1.2" /><path d="M20 5l-8 6M14 5h4" stroke={OR} /></Svg>,
    <div className="relative w-[24px] h-[24px] overflow-visible"><span className="block text-center font-['Liberation_Serif',serif] text-[32px] leading-[24px] text-[#e8842c]">A</span><svg width="24" height="24" className="absolute inset-0" fill="none"><path d="M25 8l-10 10" stroke="#333" strokeWidth="2" /><path d="M15 18c-3 0-4 2-5 6 3 0 6-1 7-4z" fill="#d8a838" /></svg></div>,
    <Svg s={24}><rect x="5" y="1" width="14" height="13" stroke={OR} /><text x="12" y="11" fontSize="9" textAnchor="middle" fill={OR} fontFamily="Liberation Sans">A</text><path d="M12 14v8M6 23h12" stroke={OR} /></Svg>,
    <Svg s={26}><rect x="1" y="1" width="18" height="20" fill="#f4f4f4" stroke="#333" /><rect x="1" y="1" width="18" height="4" fill="#4b8ba3" /><Gear x={18} y={18} r={7} /></Svg>,
];
const vH = ['h-[39px] pt-[7px]', 'h-[33px]', 'h-[32px]', 'h-[32px]', 'h-[32px]', 'h-[33px]', 'h-[32px]', 'h-[31px]', 'h-[31px]', 'h-[30px]'];

const VBar = () => (
    <div className="relative w-[36px] shrink-0 bg-[#f0f0f0] flex flex-col items-center pr-[1px]">
        {vIcons.map((ic, i) => <div key={i} className={clsx('flex items-center justify-center', vH[i])}>{ic}</div>)}
        <span className="mt-auto mb-[7px] mr-[13px] w-0 h-0 border-y-[3px] border-y-transparent border-r-[4px] border-r-[#222]" />
    </div>
);

const Ln = ({ d, b }) => <path d={d} stroke="#000" strokeWidth={b ? 2 : 1} fill="none" shapeRendering="crispEdges" />;
const T = ({ x, y, s = 13, c, children }) => (
    <text x={x} y={y + s * 0.38} fontSize={s} fontWeight={s < 11 ? 700 : 400} textAnchor="middle" fill={c || '#000'} fontFamily="'Noto Sans CJK SC',sans-serif">{children}</text>
);

const Drawing = () => (
    <svg className="absolute left-0 top-0" width="1593" height="878" viewBox="327 178 1593 878" fill="none">
        <Ln d="M534.5 212.5H1712.5V1044.5H534.5Z" />
        <Ln d="M605 225H1699V1031H605Z" b />
        <Ln d="M761.5 225V240" />
        <Ln d="M535 811.5H605M535 839.5H605M535 859.5H605M535 887.5H605M535 907.5H605M535 935.5H605M535 954.5H605M535 982.5H605M535 1002.5H605" />
        <T x={557} y={802} s={13}>描</T><T x={582} y={802} s={13}>图</T>
        <T x={557} y={850} s={13}>校</T><T x={582} y={850} s={13}>描</T>
        <T x={545} y={897} s={12}>旧</T><T x={558} y={897} s={12}>底</T><T x={570} y={897} s={12}>图</T><T x={583} y={897} s={12}>总</T><T x={596} y={897} s={12}>号</T>
        <T x={557} y={945} s={13}>签</T><T x={583} y={945} s={13}>字</T>
        <T x={556} y={992} s={13}>日</T><T x={582} y={992} s={13}>期</T>

        <T x={1567} y={345} s={13}>其</T><T x={1581} y={345} s={13}>余</T>
        <path d="M1586 338h16l-8 14zM1602 338l10-16" stroke="#000" strokeWidth="1" />

        {/* title block */}
        <Ln d="M1193.5 855.5H1699M1193.5 855V904M1216.5 855V904M1329.5 855V904M1452.5 855V904M1475.5 855V904M1581.5 855V904M1609.5 855V874M1581 874.5H1643M1643.5 855V904" />
        <Ln d="M1193 904H1699" b />
        <Ln d="M1193 905V1031M1216 905V974M1235 905V1031M1292 905V1031M1334 905V974M1362 905V1031M1530 905V1031M1193 960H1362M1193 974H1362M1530 941H1699M1530 955H1699M1362 977H1699M1530 991H1699M1614 941V991M1657 941V977" b />
        <Ln d="M1193 918.5H1362M1193 932.5H1362M1193 946.5H1362M1193 988.5H1362M1193 1002.5H1362M1193 1016.5H1362M1553.5 955V977M1575.5 955V977M1595.5 955V977" />
        <T x={1205} y={868} s={14}>序</T><T x={1205} y={890} s={14}>号</T><T x={1229} y={881} s={14}>代</T><T x={1315} y={881} s={14}>号</T>
        <T x={1344} y={881} s={14}>名</T><T x={1439} y={881} s={14}>称</T><T x={1463} y={871} s={12}>数</T><T x={1463} y={891} s={12}>量</T>
        <T x={1492} y={881} s={14}>材</T><T x={1563} y={881} s={14}>料</T>
        <T x={1595} y={865} s={11}>单件</T><T x={1626} y={865} s={11}>总计</T><T x={1600} y={890} s={11}>重</T><T x={1622} y={890} s={11}>量</T>
        <T x={1656} y={881} s={14}>备</T><T x={1686} y={881} s={14}>注</T>
        <T x={1204} y={967} s={9}>标记</T><T x={1226} y={967} s={9}>处数</T><T x={1264} y={967} s={9}>更改文件号</T><T x={1309} y={967} s={9}>签 字</T><T x={1349} y={967} s={9}>日期</T>
        <T x={1214} y={981} s={10}>设 计</T><T x={1214} y={995} s={10}>校 对</T><T x={1214} y={1009} s={10}>审 核</T><T x={1214} y={1023} s={10}>批 准</T>
        <T x={1572} y={948} s={10}>图样标记</T><T x={1636} y={948} s={10}>重 量</T><T x={1678} y={948} s={10}>比 例</T>
        <T x={1558} y={984} s={10}>共</T><T x={1587} y={984} s={10}>页</T><T x={1642} y={984} s={10}>第</T><T x={1673} y={984} s={10}>页</T>
        <T x={1615} y={1011} s={9.5}>西门子产品管理软件（上海）有限公司</T>
        <text x="338" y="1049" fontSize="12" fill="#222" fontFamily="Liberation Sans">"A3_1"</text>
    </svg>
);

const Sogou = () => (
    <div className="absolute left-[1060px] top-[665px] w-[184px] h-[22px] bg-white/95 flex items-center text-[#1f74bd]">
        <span className="ml-[1px] -mt-[4px] w-[25px] h-[25px] shrink-0 rounded-[5px] -rotate-12 bg-[#f25a22] text-white font-['Liberation_Sans',sans-serif] font-bold text-[23px] leading-[24px] text-center">S</span>
        <span className="ml-[6px] text-[14px] font-bold">中</span>
        <span className="ml-[11px]"><Moon size={15} fill="#1f74bd" /></span>
        <span className="ml-[9px] w-[13px] text-[12px] font-bold leading-none">°,</span>
        <span className="ml-[5px]"><Keyboard size={19} /></span>
        <span className="ml-[5px] text-[#b8c4cc]"><User size={17} fill="#b8c4cc" /></span>
        <span className="ml-[4px]"><Shirt size={16} fill="#1f74bd" /></span>
        <span className="ml-[7px]"><Wrench size={15} fill="#1f74bd" /></span>
    </div>
);

const Canvas = () => (
    <div className="relative flex-1 bg-[#cbcbcb] overflow-hidden">
        <Drawing />
        <div className="relative h-[24px] bg-[#f0f0f0] border-b-2 border-[#6f9db1] pl-[4px] flex items-end">
            <div className="w-[229px] h-[22px] bg-[#559fba] text-white flex items-center pl-[3px] pr-[5px] gap-[3px] font-['Liberation_Sans',sans-serif] text-[13.5px]">
                <Svg s={15}><rect x="1" y="3" width="12" height="10" fill="#d8e8ee" stroke="#333" /><circle cx="6" cy="8" r="3" stroke="#333" /><path d="M7 3V1h6" stroke="#333" /></Svg>
                <span className="whitespace-nowrap">model-plain-1-mm-template.prt</span>
                <span className="ml-auto"><X size={11} strokeWidth={1.2} /></span>
            </div>
        </div>
        <Sogou />
    </div>
);

const tree = [
    ['格式', 3], ['附加文本', 3], ['尺寸文本', 3], ['公差文本', 3, 'L3'], ['参考', 2], ['孔标注', 2, 'L2'],
    ['注释', 1, '-'], ['形位公差', 2], ['符号标注', 2], ['表面粗糙度符号', 2], ['焊接符号', 2], ['目标点符号', 2], ['相交符号', 2], ['剖面线/区域填充', 2], ['中心线', 2, 'L2'],
    ['符号', 1, '-'], ['工作流程', 2, 'L2'], ['表', 1, '+'], ['图纸常规/设置', 1, '+'], ['图纸格式', 1, '+'], ['图纸视图', 1, '-'], ['工作流程', 2, 'S'], ['公共', 2, '-'],
];

const DlgRow = ({ t, lv, f }) => (
    <div className={clsx('relative h-[20px] border-b border-[#ececec] bg-[#fafafa] text-[12px] leading-[21px] text-[#222] whitespace-nowrap', lv === 1 ? 'pl-[21px]' : lv === 2 ? 'pl-[40px]' : 'pl-[59px]')}>
        <i className="absolute left-[9px] top-0 bottom-0 border-l border-dotted border-[#999]" />
        {lv >= 2 && <i className={clsx('absolute left-[28px] top-0 border-l border-dotted border-[#999]', f === 'L2' ? 'h-[10px]' : 'bottom-0')} />}
        {lv === 3 && <i className={clsx('absolute left-[47px] top-0 border-l border-dotted border-[#999]', f === 'L3' ? 'h-[10px]' : 'bottom-0')} />}
        <i className={clsx('absolute top-[10px] border-t border-dotted border-[#999]', lv === 1 ? 'left-[9px] w-[11px]' : lv === 2 ? 'left-[28px] w-[11px]' : 'left-[47px] w-[11px]')} />
        {(f === '-' || f === '+') && <Expander sign={f} cls={lv === 1 ? 'left-[5px]' : 'left-[24px]'} />}
        {f === 'S' && <span className="absolute left-[38px] right-0 top-0 h-[19px] bg-[#87bdd0]" />}
        <span className={clsx('relative', f === 'S' && 'text-[#111]')}>{t}</span>
    </div>
);

const Arrow = ({ up }) => (
    <span className="h-[18px] flex items-center justify-center shrink-0">
        <Svg s={10}><path d={up ? 'M1 6l4-3 4 3' : 'M1 4l4 3 4-3'} stroke="#333" strokeWidth="1.4" /></Svg>
    </span>
);

const Chevron = () => <Svg s={12}><path d="M1.5 10L6 3l4.5 7" stroke="#1b6f8d" strokeWidth="2" /></Svg>;
const SecHead = ({ t }) => (
    <div className="h-[24px] pl-[6px] pr-[7px] flex items-center justify-between text-[13px] text-[#1b7a99]">
        <span>{t}</span><Chevron />
    </div>
);
const Chk = ({ t, mt }) => (
    <div className={clsx('h-[22px] pl-[7px] flex items-center gap-[5px]', mt)}>
        <span className="w-[13px] h-[13px] bg-white border border-[#444]" /><span className="mt-[1px]">{t}</span>
    </div>
);
const Divider = () => <div className="h-[3px] bg-[#aeaeae]" />;
const LabelSel = ({ l, v, mt, h }) => (
    <div className={clsx('pl-[7px] pr-[11px] flex items-center justify-between', mt, h)}>
        <span>{l}</span>
        <span className="w-[141px] h-full bg-white border border-[#aaa] pl-[4px] pr-[5px] flex items-center justify-between">{v}<Caret /></span>
    </div>
);
const Radio = ({ t, mt }) => (
    <div className={clsx('h-[16px] pl-[5px] flex items-center gap-[6px]', mt)}>
        <span className="w-[12px] h-[12px] rounded-full bg-white border border-[#444]" /><span>{t}</span>
    </div>
);

const Dialog = () => (
    <div className="absolute left-[328px] top-[232px] w-[596px] h-[571px] bg-[#dcdcdc] border border-[#a8a8a8] border-t-0 flex flex-col text-[12px] text-[#222] whitespace-nowrap">
        <div className="h-[24px] bg-[#559fba] text-white flex items-center pl-[5px] pr-[8px] text-[14px]">
            <Svg s={16}><circle cx="8" cy="8" r="5" stroke="#fff" strokeWidth="3" strokeDasharray="2.6 1" /><circle cx="8" cy="8" r="2" fill="#559fba" stroke="#fff" /></Svg>
            <span className="ml-[6px]">制图首选项</span>
            <span className="ml-auto"><Svg s={14}><path d="M4 3a6 6 0 1 0 6 0M4 1v3H1" stroke="#fff" strokeWidth="1.6" /></Svg></span>
            <span className="ml-[6px]"><Svg s={14}><path d="M2 2l10 10M12 2L2 12" stroke="#fff" strokeWidth="2" /></Svg></span>
        </div>
        <div className="mt-[8px] h-[23px] pl-[9px] pr-[9px] flex items-center">
            <Svg s={24} h={24}><path d="M1 16l3-12h5v12zM14 16V4h5l3 12M9 8h5M1 16h9v7H1zM14 16h9v7h-9z" stroke="#444" /></Svg>
            <span className="ml-[2px] w-[32px]">查找</span>
            <span className="flex-1 h-full bg-white border border-[#aaa]" />
        </div>
        <div className="mt-[9px] h-[457px] pl-[12px] flex gap-[12px]">
            <div className="w-[175px] bg-white border border-[#b4b4b4] flex overflow-hidden">
                <div className="w-[155px] shrink-0 overflow-hidden">{tree.map((r, i) => <DlgRow key={i} t={r[0]} lv={r[1]} f={r[2]} />)}</div>
                <div className="w-[16px] bg-[#f0f0f0] flex flex-col">
                    <Arrow up /><span className="h-[151px] shrink-0" /><span className="h-[112px] mx-px bg-[#c8c8c8] shrink-0" /><span className="flex-1" /><Arrow />
                </div>
            </div>
            <div className="w-[384px] bg-[#f0f0f0] border border-[#b4b4b4] flex overflow-hidden">
                <div className="w-[365px] shrink-0 overflow-hidden">
                    <SecHead t="边界" />
                    <Chk t="显示" mt="mt-[4px]" />
                    <div className="mt-[2px] h-[20px] pl-[7px] pr-[11px] flex items-center justify-between"><span className="mt-[1px]">颜色</span><span className="w-[72px] h-[20px] bg-[#808080] border border-[#555]" /></div>
                    <div className="mt-[3px] mb-[10px] h-[20px] pl-[7px] pr-[11px] flex items-center justify-between"><span className="mt-[1px]">颜色 - 活动草图视图</span><span className="w-[72px] h-[20px] bg-[#0000ff] border border-[#333]" /></div>
                    <Divider />
                    <div className="mt-[1px]"><SecHead t="预览" /></div>
                    <div className="mt-[11px] h-[32px] pl-[7px] pr-[11px] flex items-center">
                        <span>样式</span>
                        <span className="ml-[168px] w-[20px] h-[11px] border border-[#222] shrink-0" />
                        <span className="ml-[12px]"><Svg s={24}><path d="M12 2l9 4v12l-9 4-9-4V6zM3 6l9 4 9-4M12 10v12M3 18l9-4 9 4M12 2v12" stroke="#aaa" /></Svg></span>
                        <span className="ml-[9px]"><Svg s={24}><path d="M12 2l9 4v12l-9 4-9-4V6zM3 6l9 4 9-4M12 10v12" stroke="#aaa" /></Svg></span>
                        <span className="ml-[7px] w-[32px] h-[32px] bg-[#87bdd0] flex items-center justify-center">
                            <svg width="24" height="26" viewBox="0 0 24 26"><defs><linearGradient id="sh" x1="0" x2="1"><stop offset="0" stopColor="#eee" /><stop offset="1" stopColor="#9a9a9a" /></linearGradient></defs><path d="M12 1l11 5v14l-11 5-11-5V6z" fill="url(#sh)" /><path d="M12 1l11 5-11 5L1 6z" fill="#f8f8f8" /></svg>
                        </span>
                        <span className="ml-[7px] w-[19px] h-[32px] border border-[#999] flex items-center justify-center"><span className="w-0 h-0 border-x-[5px] border-x-transparent border-t-[6px] border-t-[#333]" /></span>
                    </div>
                    <Chk t="光标跟踪" mt="mt-[5px] mb-[9px]" />
                    <Divider />
                    <div className="mt-[1px]"><SecHead t="常规" /></div>
                    <Chk t="关联对齐" mt="mt-[4px]" />
                    <LabelSel l="显示已抽取边的面" v="显示和强调" mt="mt-[3px]" h="h-[23px]" />
                    <LabelSel l="选择投影为圆弧的样条" v="对自动功能从不" mt="mt-[4px] mb-[9px]" h="h-[24px]" />
                    <Divider />
                    <div className="mt-[1px]"><SecHead t="智能轻量级视图" /></div>
                    <div className="mt-[5px] ml-[7px] mr-[11px] h-[120px] bg-[#dcdcdc] border border-[#aaa]">
                        <div className="h-[22px] pl-[8px] flex items-center text-[#1b7a99]">处理无智能轻量级数据的体</div>
                        <Radio t="忽略视图中的体" mt="mt-[4px]" />
                        <Radio t="停止更新并发出通知" mt="mt-[7px]" />
                        <Radio t="停止更新" mt="mt-[7px]" />
                    </div>
                </div>
                <div className="flex-1 flex flex-col bg-[#f0f0f0]">
                    <Arrow up /><span className="h-[279px] bg-[#c8c8c8] shrink-0" /><span className="flex-1" /><Arrow />
                </div>
            </div>
        </div>
        <div className="mt-[15px] h-[25px] pr-[15px] flex justify-end gap-[5px] text-[13px]">
            <span className="w-[54px] bg-[#74b0c8] text-white flex items-center justify-center">确定</span>
            <span className="w-[54px] border border-[#999] flex items-center justify-center">应用</span>
            <span className="w-[54px] border border-[#999] flex items-center justify-center">取消</span>
        </div>
    </div>
);

const App = () => (
    <div className="relative w-[1920px] h-[1080px] overflow-hidden bg-[#f0f0f0] flex flex-col font-['Liberation_Sans','Noto_Sans_CJK_SC',sans-serif]">
        <TitleBar />
        <TabBar />
        <Ribbon />
        <Toolbar />
        <div className="flex h-[878px]">
            <SideNav />
            <Navigator />
            <VBar />
            <Canvas />
        </div>
        <div className="relative h-[22px] bg-[#f0f0f0] border-t border-[#b4b4b4] flex items-center justify-end pr-[2px] text-[14px] text-[#666] tracking-[.6px] whitespace-nowrap">
            UG爱好者论坛@小猫物语坤
            <span className="absolute left-[1830px] top-[4px] opacity-70"><Svg s={14}><rect x="1" y="1" width="12" height="12" rx="2" stroke="#777" fill="#ccc" /></Svg></span>
        </div>
        <div className="h-[2px] bg-[#333]" />
        <Dialog />
    </div>
);

export default App;
